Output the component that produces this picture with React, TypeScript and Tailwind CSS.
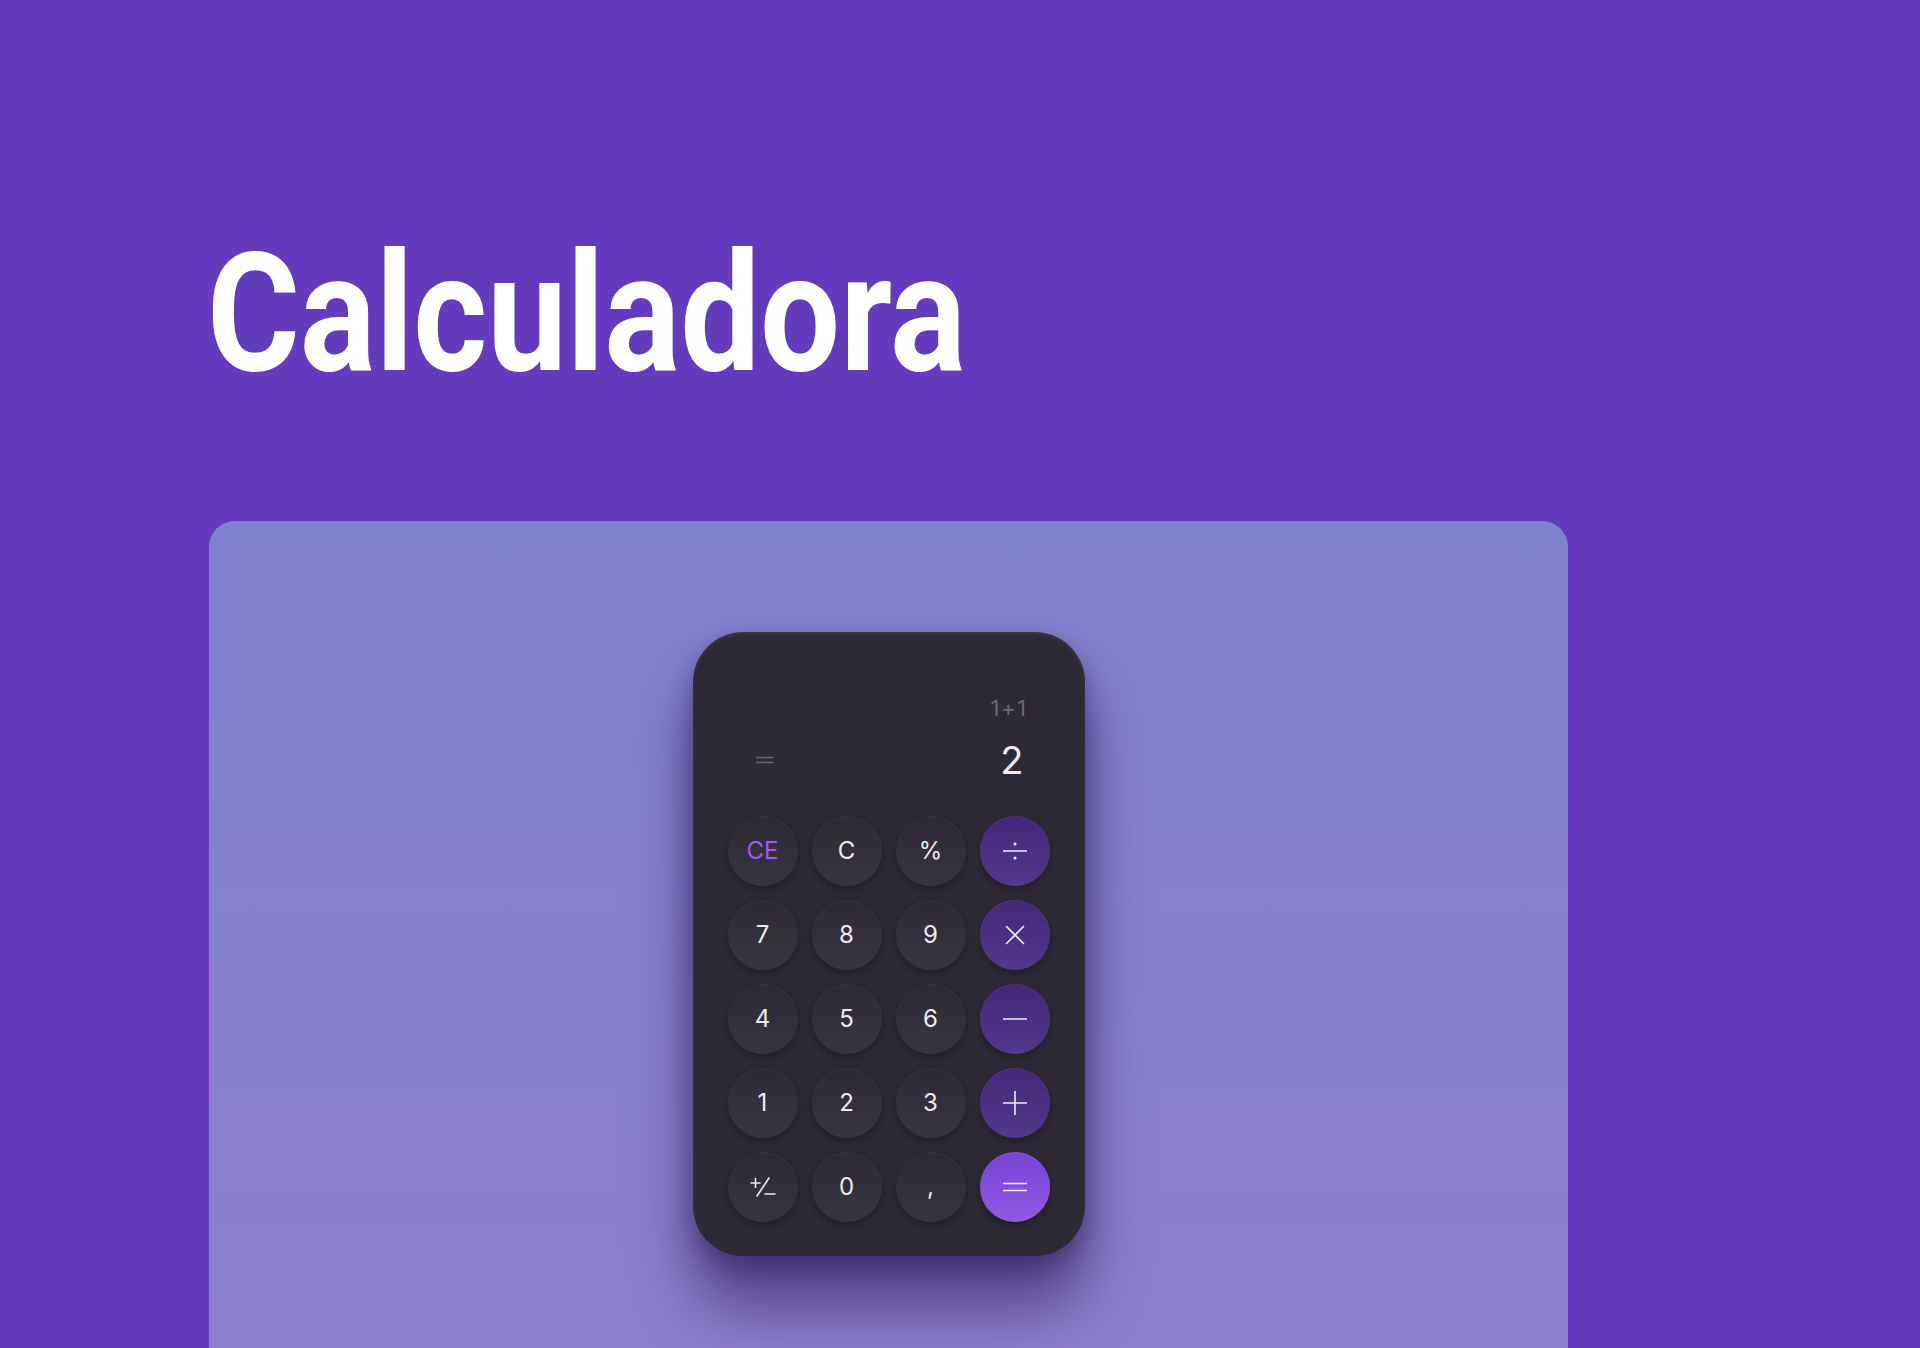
import React from "react";

type Key = { label: React.ReactNode; kind?: "num" | "op" | "eq" | "ce" };

const stroke = { stroke: "currentColor", strokeWidth: 1.6, strokeLinecap: "round" as const, fill: "none" };

const Divide = () => (
  <svg width="24" height="24" viewBox="0 0 24 24">
    <line x1="0.5" y1="12" x2="23.5" y2="12" {...stroke} />
    <circle cx="12" cy="5" r="1.5" fill="currentColor" />
    <circle cx="12" cy="19" r="1.5" fill="currentColor" />
  </svg>
);

const Times = () => (
  <svg width="24" height="24" viewBox="0 0 24 24">
    <line x1="3.5" y1="3.5" x2="20.5" y2="20.5" {...stroke} />
    <line x1="20.5" y1="3.5" x2="3.5" y2="20.5" {...stroke} />
  </svg>
);

const Minus = () => (
  <svg width="24" height="24" viewBox="0 0 24 24">
    <line x1="0.5" y1="12" x2="23.5" y2="12" {...stroke} />
  </svg>
);

const Plus = () => (
  <svg width="24" height="24" viewBox="0 0 24 24">
    <line x1="0.5" y1="12" x2="23.5" y2="12" {...stroke} />
    <line x1="12" y1="0.5" x2="12" y2="23.5" {...stroke} />
  </svg>
);

const Equals = () => (
  <svg width="24" height="24" viewBox="0 0 24 24">
    <line x1="0.5" y1="8.5" x2="23.5" y2="8.5" {...stroke} />
    <line x1="0.5" y1="15.5" x2="23.5" y2="15.5" {...stroke} />
  </svg>
);

const PlusMinus = () => (
  <svg width="26" height="22" viewBox="0 0 26 22">
    <line x1="1" y1="7" x2="10" y2="7" {...stroke} />
    <line x1="5.5" y1="2.5" x2="5.5" y2="11.5" {...stroke} />
    <line x1="19" y1="2" x2="7" y2="20" {...stroke} />
    <line x1="15" y1="18" x2="25" y2="18" {...stroke} />
  </svg>
);

const keys: Key[] = [
  { label: "CE", kind: "ce" },
  { label: "C" },
  { label: "%" },
  { label: <Divide />, kind: "op" },
  { label: "7" },
  { label: "8" },
  { label: "9" },
  { label: <Times />, kind: "op" },
  { label: "4" },
  { label: "5" },
  { label: "6" },
  { label: <Minus />, kind: "op" },
  { label: "1" },
  { label: "2" },
  { label: "3" },
  { label: <Plus />, kind: "op" },
  { label: <PlusMinus /> },
  { label: "0" },
  { label: "," },
  { label: <Equals />, kind: "eq" },
];

function KeyButton({ k }: { k: Key }) {
  const base =
    "w-[70px] h-[70px] rounded-full flex items-center justify-center text-[24px] leading-none";
  let look =
    "bg-gradient-to-b from-[#2e2a38] to-[#37333f] text-[#ecebf0] shadow-[0_4px_8px_rgba(0,0,0,0.28),inset_0_1px_1px_rgba(255,255,255,0.05)]";
  if (k.kind === "ce")
    look =
      "bg-gradient-to-b from-[#2e2a38] to-[#37333f] text-[#9a5cf2] shadow-[0_4px_8px_rgba(0,0,0,0.28),inset_0_1px_1px_rgba(255,255,255,0.05)]";
  if (k.kind === "op")
    look =
      "bg-gradient-to-b from-[#442778] to-[#52378b] text-[#f1eef8] shadow-[0_4px_8px_rgba(0,0,0,0.28),inset_0_1px_1px_rgba(255,255,255,0.06)]";
  if (k.kind === "eq")
    look =
      "bg-gradient-to-b from-[#7842d4] to-[#8f5be4] text-[#f3eefc] shadow-[0_4px_10px_rgba(0,0,0,0.3),inset_0_1px_1px_rgba(255,255,255,0.1)]";
  return <button className={`${base} ${look}`}>{k.label}</button>;
}

export default function App() {
  return (
    <div className="min-h-[1348px] bg-[#643bbd] pl-[209px] pt-[231px] overflow-hidden">
      {/* Title */}
      <h1
        className="h-[165px] text-[165px] leading-none font-bold text-white origin-left scale-x-[0.86] -ml-[2px]"
        style={{ fontFamily: "Roboto, 'Liberation Sans', sans-serif" }}
      >
        Calculadora
      </h1>

      {/* Panel */}
      <div className="mt-[125px] w-[1359px] h-[860px] rounded-[26px] bg-gradient-to-b from-[#8081cf] to-[#8d7ecb] flex justify-center pt-[111px]">
        <div
          className="w-[392px] h-[624px] rounded-[50px] bg-[#2d2937] px-[35px] flex flex-col shadow-[0_50px_60px_rgba(45,25,90,0.6),0_12px_24px_rgba(30,20,60,0.4),inset_0_2px_3px_rgba(255,255,255,0.07)]"
          style={{ fontFamily: "Inter, 'Noto Sans', sans-serif" }}
        >
          {/* Display */}
          <div className="pt-[65px] pr-[22px] text-right text-[22px] leading-none text-[#6c6877] tracking-[1.5px]">
            1+1
          </div>
          <div className="mt-[22px] flex items-center justify-between pl-[28px] pr-[26px] h-[38px]">
            <svg width="17" height="8" viewBox="0 0 17 8">
              <line x1="0" y1="1.5" x2="17" y2="1.5" stroke="#6a6676" strokeWidth="1.6" />
              <line x1="0" y1="6.5" x2="17" y2="6.5" stroke="#6a6676" strokeWidth="1.6" />
            </svg>
            <span className="text-[38px] leading-none text-[#ecebf0]">2</span>
          </div>

          {/* Keys */}
          <div className="mt-[37px] grid grid-cols-4 gap-x-[14px] gap-y-[14px]">
            {keys.map((k, i) => (
              <KeyButton key={i} k={k} />
            ))}
          </div>
        </div>
      </div>
    </div>
  );
}
